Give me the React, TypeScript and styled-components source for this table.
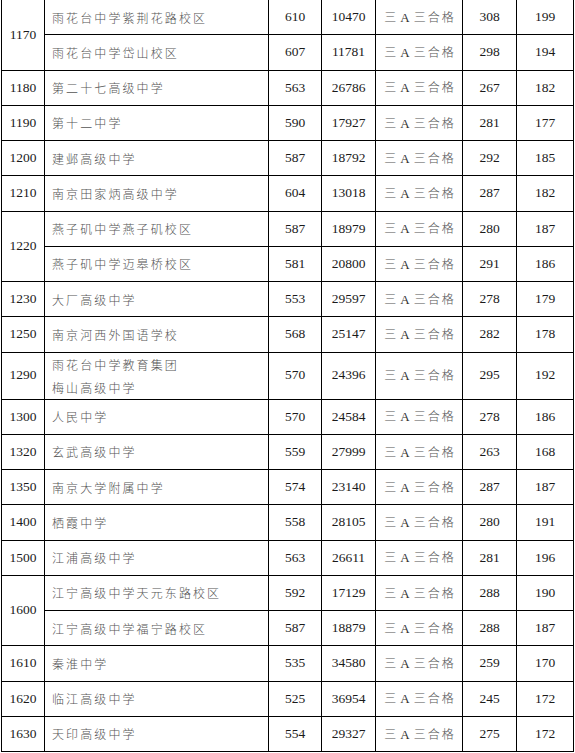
import React from 'react';
import styled, { createGlobalStyle } from 'styled-components';

const GlobalStyle = createGlobalStyle`
  html, body {
    margin: 0;
    padding: 0;
    background: #ffffff;
  }
  body {
    font-family: "Liberation Serif", "Noto Sans CJK SC", serif;
  }
`;

const Page = styled.div`
  width: 575px;
  height: 753px;
  overflow: hidden;
  padding-left: 1px;
  box-sizing: border-box;
`;

const Table = styled.table`
  border-collapse: collapse;
  table-layout: fixed;
  width: 572px;
  margin-top: -1px;
`;

const Col = styled.col<{ $w: number }>`
  width: ${(p) => p.$w}px;
`;

const Row = styled.tr<{ $tall?: boolean }>`
  height: ${(p) => (p.$tall ? 43.6 : 35.25)}px;
`;

const Cell = styled.td`
  border: 1.5px solid #000;
  padding: 0;
  text-align: center;
  vertical-align: middle;
  font-family: "Liberation Serif", "Noto Sans CJK SC", serif;
  font-size: 13.5px;
  color: #1a1a1a;
  line-height: 1.2;
`;

const NameCell = styled(Cell)`
  text-align: left;
  padding-left: 7px;
  font-family: "Noto Sans CJK SC", sans-serif;
  font-size: 12px;
  letter-spacing: 2.1px;
  color: #555;
  line-height: 23px;
  font-weight: 300;
`;

const GradeCell = styled(Cell)`
  font-family: "Noto Sans CJK SC", sans-serif;
  font-size: 12px;
  letter-spacing: 2px;
  color: #555;
  font-weight: 300;
  padding-left: 2px;
  padding-top: 1px;
`;

const Latin = styled.span`
  font-family: "Liberation Serif", serif;
  font-size: 13px;
  margin: 0 2px;
  color: #333;
`;

interface School {
  name: string[];
  a: number;
  b: number;
  c: number;
  d: number;
}

interface Group {
  id: number;
  schools: School[];
}

const s = (name: string | string[], a: number, b: number, c: number, d: number): School => ({
  name: Array.isArray(name) ? name : [name],
  a,
  b,
  c,
  d,
});

const data: Group[] = [
  { id: 1170, schools: [s('雨花台中学紫荆花路校区', 610, 10470, 308, 199), s('雨花台中学岱山校区', 607, 11781, 298, 194)] },
  { id: 1180, schools: [s('第二十七高级中学', 563, 26786, 267, 182)] },
  { id: 1190, schools: [s('第十二中学', 590, 17927, 281, 177)] },
  { id: 1200, schools: [s('建邺高级中学', 587, 18792, 292, 185)] },
  { id: 1210, schools: [s('南京田家炳高级中学', 604, 13018, 287, 182)] },
  { id: 1220, schools: [s('燕子矶中学燕子矶校区', 587, 18979, 280, 187), s('燕子矶中学迈皋桥校区', 581, 20800, 291, 186)] },
  { id: 1230, schools: [s('大厂高级中学', 553, 29597, 278, 179)] },
  { id: 1250, schools: [s('南京河西外国语学校', 568, 25147, 282, 178)] },
  { id: 1290, schools: [s(['雨花台中学教育集团', '梅山高级中学'], 570, 24396, 295, 192)] },
  { id: 1300, schools: [s('人民中学', 570, 24584, 278, 186)] },
  { id: 1320, schools: [s('玄武高级中学', 559, 27999, 263, 168)] },
  { id: 1350, schools: [s('南京大学附属中学', 574, 23140, 287, 187)] },
  { id: 1400, schools: [s('栖霞中学', 558, 28105, 280, 191)] },
  { id: 1500, schools: [s('江浦高级中学', 563, 26611, 281, 196)] },
  { id: 1600, schools: [s('江宁高级中学天元东路校区', 592, 17129, 288, 190), s('江宁高级中学福宁路校区', 587, 18879, 288, 187)] },
  { id: 1610, schools: [s('秦淮中学', 535, 34580, 259, 170)] },
  { id: 1620, schools: [s('临江高级中学', 525, 36954, 245, 172)] },
  { id: 1630, schools: [s('天印高级中学', 554, 29327, 275, 172)] },
];

const widths = [43, 224, 53, 54, 87, 54, 57];

const Grade: React.FC = () => (
  <GradeCell>
    三<Latin>A</Latin>三合格
  </GradeCell>
);

const App: React.FC = () => {
  return (
    <Page>
      <GlobalStyle />
      <Table>
        <colgroup>
          {widths.map((w, i) => (
            <Col key={i} $w={w} />
          ))}
        </colgroup>
        <tbody>
          {data.map((g) =>
            g.schools.map((sc, i) => (
              <Row key={`${g.id}-${i}`} $tall={sc.name.length > 1}>
                {i === 0 && <Cell rowSpan={g.schools.length}>{g.id}</Cell>}
                <NameCell>
                  {sc.name.map((line, j) => (
                    <div key={j}>{line}</div>
                  ))}
                </NameCell>
                <Cell>{sc.a}</Cell>
                <Cell>{sc.b}</Cell>
                <Grade />
                <Cell>{sc.c}</Cell>
                <Cell>{sc.d}</Cell>
              </Row>
            ))
          )}
        </tbody>
      </Table>
    </Page>
  );
};

export default App;
